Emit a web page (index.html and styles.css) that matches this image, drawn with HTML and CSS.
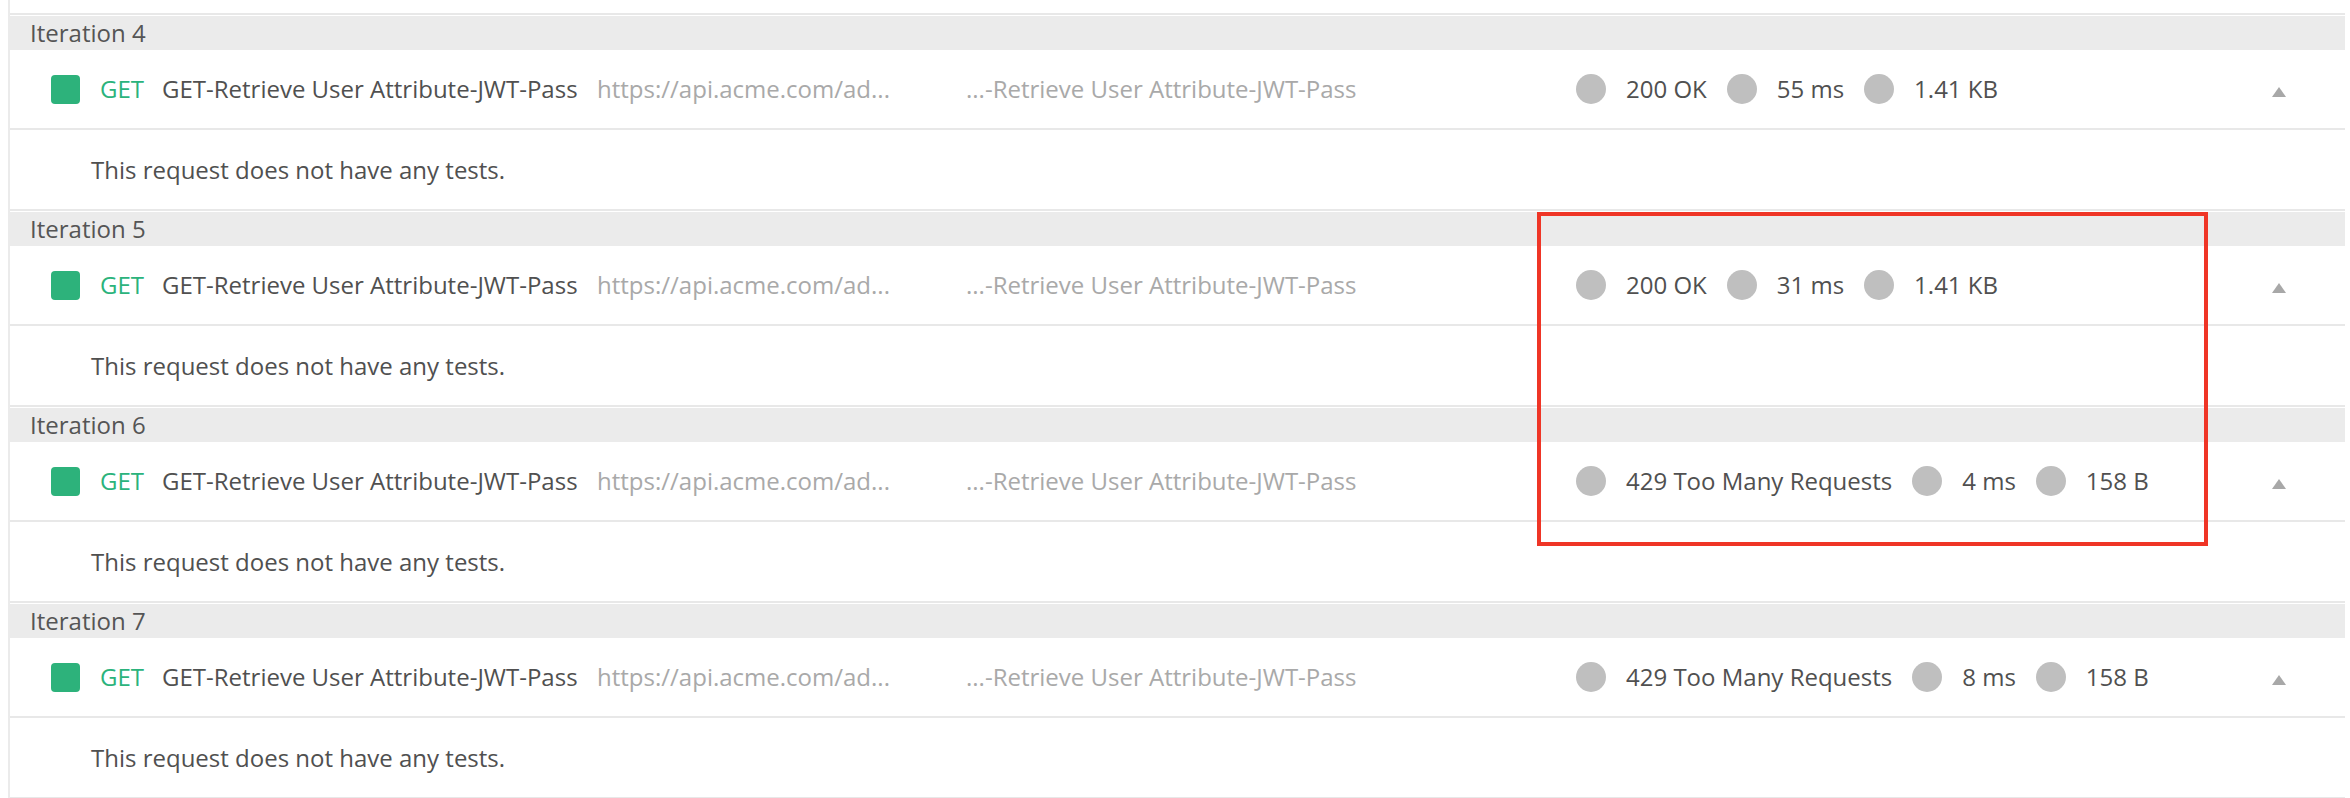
FILE: index.html
```html
<!DOCTYPE html>
<html lang="en">
<head>
<meta charset="utf-8">
<title>Runner results</title>
<link rel="stylesheet" href="styles.css">
</head>
<body>
<div class="panel">
  <div class="tail"></div>

  <section class="iteration">
    <div class="iter-head">Iteration 4</div>
    <div class="req-row">
      <span class="method-box"></span>
      <span class="method">GET</span>
      <span class="name">GET-Retrieve User Attribute-JWT-Pass</span>
      <span class="url">https://api.acme.com/ad...</span>
      <span class="path">...-Retrieve User Attribute-JWT-Pass</span>
      <span class="stats">
        <span class="dot"></span><span class="stat">200 OK</span>
        <span class="dot"></span><span class="stat">55 ms</span>
        <span class="dot"></span><span class="stat">1.41 KB</span>
      </span>
      <span class="caret"></span>
    </div>
    <div class="tests">This request does not have any tests.</div>
  </section>

  <section class="iteration">
    <div class="iter-head">Iteration 5</div>
    <div class="req-row">
      <span class="method-box"></span>
      <span class="method">GET</span>
      <span class="name">GET-Retrieve User Attribute-JWT-Pass</span>
      <span class="url">https://api.acme.com/ad...</span>
      <span class="path">...-Retrieve User Attribute-JWT-Pass</span>
      <span class="stats">
        <span class="dot"></span><span class="stat">200 OK</span>
        <span class="dot"></span><span class="stat">31 ms</span>
        <span class="dot"></span><span class="stat">1.41 KB</span>
      </span>
      <span class="caret"></span>
    </div>
    <div class="tests">This request does not have any tests.</div>
  </section>

  <section class="iteration">
    <div class="iter-head">Iteration 6</div>
    <div class="req-row">
      <span class="method-box"></span>
      <span class="method">GET</span>
      <span class="name">GET-Retrieve User Attribute-JWT-Pass</span>
      <span class="url">https://api.acme.com/ad...</span>
      <span class="path">...-Retrieve User Attribute-JWT-Pass</span>
      <span class="stats">
        <span class="dot"></span><span class="stat">429 Too Many Requests</span>
        <span class="dot"></span><span class="stat">4 ms</span>
        <span class="dot"></span><span class="stat">158 B</span>
      </span>
      <span class="caret"></span>
    </div>
    <div class="tests">This request does not have any tests.</div>
  </section>

  <section class="iteration">
    <div class="iter-head">Iteration 7</div>
    <div class="req-row">
      <span class="method-box"></span>
      <span class="method">GET</span>
      <span class="name">GET-Retrieve User Attribute-JWT-Pass</span>
      <span class="url">https://api.acme.com/ad...</span>
      <span class="path">...-Retrieve User Attribute-JWT-Pass</span>
      <span class="stats">
        <span class="dot"></span><span class="stat">429 Too Many Requests</span>
        <span class="dot"></span><span class="stat">8 ms</span>
        <span class="dot"></span><span class="stat">158 B</span>
      </span>
      <span class="caret"></span>
    </div>
    <div class="tests">This request does not have any tests.</div>
  </section>

  <div class="highlight"></div>
</div>
</body>
</html>
```

FILE: styles.css
```css
* { box-sizing: border-box; }

html, body {
  margin: 0;
  padding: 0;
  background: #ffffff;
}

body {
  font-family: "Open Sans", "Liberation Sans", sans-serif;
  font-size: 24px;
  color: #505050;
  height: 798px;
  overflow: hidden;
}

.panel {
  position: relative;
  margin: 0 5px 0 8px;
  border-left: 2px solid #ebebeb;
  min-height: 798px;
}

.tail {
  height: 15px;
  border-bottom: 2px solid #e8e8e8;
}

.iteration {
  padding-top: 1px;
}

.iter-head {
  height: 34px;
  background: #ebebeb;
  padding-left: 20px;
  display: flex;
  align-items: center;
  color: #555555;
  line-height: 1;
}

.req-row {
  height: 80px;
  border-bottom: 2px solid #e8e8e8;
  display: grid;
  grid-template-columns: 29px 42px 415px 349px 590px auto 1fr 15px;
  column-gap: 20px;
  align-items: center;
  padding: 0 58px 0 41px;
  white-space: nowrap;
  line-height: 1;
}

.method-box {
  width: 29px;
  height: 29px;
  border-radius: 4px;
  background: #2db27b;
}

.method {
  color: #2bb37c;
}

.name {
  color: #505050;
}

.url,
.path {
  color: #a9a9a9;
}

.stats {
  display: flex;
  align-items: center;
  gap: 20px;
}

.dot {
  width: 30px;
  height: 30px;
  border-radius: 50%;
  background: #bfbfbf;
  flex: none;
}

.stat {
  color: #505050;
}

.caret {
  grid-column: 8;
  width: 0;
  height: 0;
  border-left: 7px solid transparent;
  border-right: 7px solid transparent;
  border-bottom: 10px solid #a8a8a8;
  margin-top: 5px;
}

.tests {
  height: 81px;
  border-bottom: 2px solid #e8e8e8;
  padding-left: 81px;
  display: flex;
  align-items: center;
  color: #505050;
  line-height: 1;
}

.highlight {
  position: absolute;
  left: 1527px;
  top: 212px;
  width: 671px;
  height: 334px;
  border: 4px solid #ef3526;
  pointer-events: none;
}
```
